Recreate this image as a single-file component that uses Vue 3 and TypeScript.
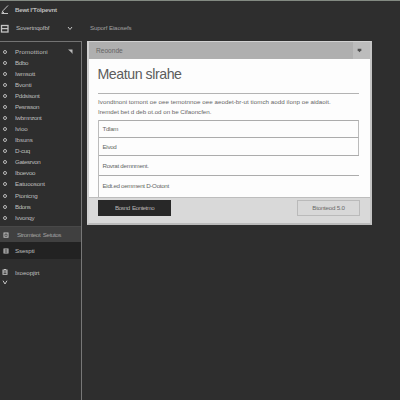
<script setup lang="ts">
interface Item { label: string; spacing: number }

const items: Item[] = [
  { label: 'Promotttoni', spacing: 0.1 },
  { label: 'Bdbo', spacing: -0.3 },
  { label: 'Iwmsott', spacing: -0.2 },
  { label: 'Bvonti', spacing: -0.1 },
  { label: 'Pddsisont', spacing: -0.3 },
  { label: 'Pesnsson', spacing: -0.4 },
  { label: 'Iwbmnzont', spacing: -0.4 },
  { label: 'Ivioo', spacing: -0.1 },
  { label: 'Ibsuns', spacing: -0.1 },
  { label: 'D-cuq', spacing: -0.3 },
  { label: 'Gatesrvon', spacing: -0.35 },
  { label: 'Iboevoo', spacing: -0.25 },
  { label: 'Eatuoosont', spacing: -0.15 },
  { label: 'Ptonicng', spacing: -0.2 },
  { label: 'Bdons', spacing: -0.4 },
  { label: 'Ivvonqy', spacing: -0.3 },
]
const fields: string[] = ['Tdlam', 'Eivod', 'Rovrat demnment.', 'Eidt.ed oemment D-Ootont']
</script>

<template>
  <div class="app">
    <header class="title-bar">
      <svg class="pen" viewBox="0 0 10 10"><path d="M8 0.5 3 5.7 1.8 8.5H8" /><path d="M2.5 6.5 4 8" /></svg>
      <span class="brand">Bewt I'Tölpevnt</span>
    </header>
    <nav class="toolbar">
      <svg class="panel-icon" viewBox="0 0 9 9"><rect x="1.5" y="1.5" width="6.5" height="6.5" /><path d="M1 4.6h7" /></svg>
      <span class="workspace">Sovertnqofbf</span>
      <svg class="chevron" viewBox="0 0 6 5"><path d="m1 1 2 2.5L5 1" /></svg>
      <span class="crumb">Suporf Eiaosefs</span>
    </nav>
    <div class="body">
      <aside class="sidebar">
        <ul class="list">
          <li v-for="(item, i) in items" :key="item.label">
            <i class="dot"></i>
            <span :style="{ letterSpacing: item.spacing + 'px' }">{{ item.label }}</span>
            <svg v-if="i === 0" class="corner" viewBox="0 0 5 5"><path d="M0 .5h4.5V5L3 3Z" /></svg>
          </li>
        </ul>
        <div class="row selected">
          <svg class="small-icon" viewBox="0 0 6 6"><rect x="1" y="1" width="4" height="4.2" /><path d="M2.2 3.2h1.6" /></svg>
          <span>Stromteot&nbsp; Setutos</span>
        </div>
        <div class="row dark">
          <svg class="small-icon" viewBox="0 0 6 6"><rect x="1" y="1" width="4" height="4" /><path d="M1 3h4" /></svg>
          <span>Ssespti</span>
        </div>
        <div class="row last">
          <div class="icon-stack">
            <svg class="small-icon" viewBox="0 0 6 6"><rect x="1" y="1" width="4" height="4.3" /><path d="M1 3h4M2 .5h2" /></svg>
            <svg class="down" viewBox="0 0 6 5"><path d="m1 .7 2 3.3L5 .7" /></svg>
          </div>
          <span>Ixoeopjtrt</span>
        </div>
      </aside>
      <main class="stage">
        <section class="dialog">
          <header class="dialog-head">
            <span>Reoonde</span>
            <button class="menu"><svg viewBox="0 0 6 6"><path d="M.8 1h4.4v1.8L3 5.2.8 2.8Z" /></svg></button>
          </header>
          <div class="content">
            <h1>Meatun slrahe</h1>
            <div class="intro">
              <p class="line-one">Ivondtnoni tomont oe oee temotnnoe oee aeodet-br-ut tiomch aodd ilonp oe aidaoit.</p>
              <p class="line-two">Iremdet bet d deb ot.od on be Cifaoncfen.</p>
            </div>
            <div class="fields">
              <div v-for="(field, i) in fields" :key="field" class="field" :class="'field-' + i">{{ field }}</div>
            </div>
          </div>
          <footer class="actions">
            <button class="primary">Bosnd&nbsp; Eontetmo</button>
            <button class="secondary">Btonteod 5.0</button>
          </footer>
        </section>
      </main>
    </div>
  </div>
</template>

<style>
body { margin: 0; background: #2e2e2e; }
</style>
<style scoped>
* { box-sizing: border-box; }
.app { width: 400px; height: 400px; overflow: hidden; display: flex; flex-direction: column; background: #2e2e2e; border-top: 1px solid #838a82; color: #bebebe; font: 6.2px/8px "Liberation Sans", Arial, sans-serif; white-space: nowrap; }
svg { display: block; flex: none; fill: none; stroke: #c4c4c4; stroke-width: 1; }
button { font: inherit; padding: 0; margin: 0; border-radius: 0; }
.title-bar { height: 17px; display: flex; align-items: center; flex: none; }
.pen { width: 10px; height: 10px; margin-right: 5px; }
.brand { font-weight: bold; letter-spacing: -.25px; }
.toolbar { height: 23px; flex: none; display: flex; align-items: center; padding-bottom: 3px; }
.panel-icon { width: 9px; height: 9px; margin-right: 7px; stroke-width: 1.3; }
.workspace { width: 51px; letter-spacing: -.15px; }
.chevron { width: 6px; height: 5px; margin-right: 17px; }
.crumb { color: #a0a0a0; letter-spacing: -.15px; }
.body { display: flex; flex: 1; min-height: 0; }
.sidebar { width: 82px; flex: none; border-top: 1px solid #737373; border-right: 1px solid #777; padding-top: 4px; }
.list { list-style: none; margin: 0; padding: 0; height: 180px; }
.list li { height: 11.08px; display: flex; align-items: center; padding-left: 3px; }
.dot { width: 4px; height: 4px; margin-right: 8px; border: 1px solid #bbb; border-radius: 50%; }
.corner { width: 5px; height: 5px; margin-left: auto; margin-right: 8px; fill: #bbb; stroke: none; }
.row { display: flex; align-items: center; letter-spacing: -.1px; }
.small-icon { width: 6px; height: 6px; }
.selected { height: 16px; background: #404040; border-top: 1px solid #484848; padding-left: 3px; gap: 8px; color: #a2a2a2; letter-spacing: -.42px; }
.dark { height: 17px; background: #222; padding-left: 3px; gap: 6px; }
.selected { letter-spacing: -.4px; }
.last { height: 26px; padding-left: 2px; gap: 7px; margin-top: 5px; }
.last > span { margin-top: -9px; }
.icon-stack { display: flex; flex-direction: column; gap: 5px; }
.down { width: 6px; height: 5px; }
.stage { padding: 0 0 0 5px; }
.dialog { width: 285px; height: 184px; border: 1px solid; border-width: 1px 2px 2px; border-color: #d2d2d2 #c4c4c4 #bbb #d2d2d2; background: #fdfdfd; display: flex; flex-direction: column; color: #666; }
.dialog-head { height: 17px; flex: none; background: #afafaf; display: flex; align-items: center; justify-content: space-between; padding-left: 7px; color: #646464; font-size: 6.6px; }
.menu { width: 17px; height: 17px; border: 0; background: #bcbcbc; display: grid; place-items: center; }
.menu svg { width: 5px; height: 5px; fill: #505050; stroke: none; margin-right: 4px; }
.content { height: 138px; padding: 0 11px 0 8px; }
h1 { font-size: 14.2px; line-height: 18px; font-weight: normal; color: #5c5c5c; margin: 0; padding: 6px 0 0 .5px; height: 34px; letter-spacing: -.45px; }
.intro { height: 27px; border-top: 1px solid #b3b3b3; margin-left: 1px; padding-top: 3px; }
.intro p { margin: 0; line-height: 10px; }
.line-one { letter-spacing: .05px; }
.line-two { letter-spacing: -.02px; }
.fields { margin-left: 1px; border-left: 1px solid #bcbcbc; height: 77px; }
.field { border-top: 1px solid #acacac; padding-left: 3.5px; display: flex; align-items: center; letter-spacing: -.3px; }
.field-0 { height: 17px; border-right: 1px solid #bbb; }
.field-1 { height: 18px; border-right: 1px solid #bbb; }
.field-2 { height: 20px; }
.field-3 { height: 20px; }
.actions { height: 26px; background: #d9d9d9; border-top: 1px solid #bdbdbd; display: flex; align-items: flex-start; justify-content: space-between; padding: 2px 10px 0 9px; }
.primary { width: 73px; height: 16px; border: 0; background: #282828; color: #b4b4b4; letter-spacing: -.6px; }
.secondary { width: 63px; height: 16px; border: 1px solid #bababa; background: #d8d8d8; color: #6a6a6a; letter-spacing: -.22px; }
.primary { letter-spacing: -.55px; }
</style>
